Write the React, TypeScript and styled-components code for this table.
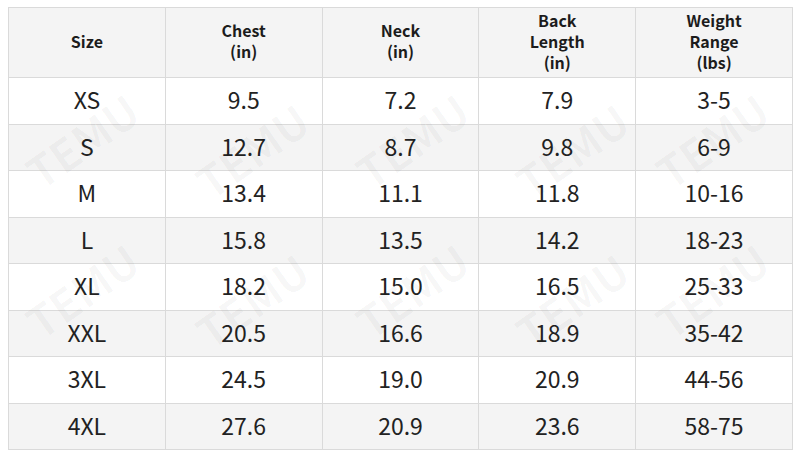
import React from "react";
import styled, { createGlobalStyle } from "styled-components";

const rows = [
  ["XS", "9.5", "7.2", "7.9", "3-5"],
  ["S", "12.7", "8.7", "9.8", "6-9"],
  ["M", "13.4", "11.1", "11.8", "10-16"],
  ["L", "15.8", "13.5", "14.2", "18-23"],
  ["XL", "18.2", "15.0", "16.5", "25-33"],
  ["XXL", "20.5", "16.6", "18.9", "35-42"],
  ["3XL", "24.5", "19.0", "20.9", "44-56"],
  ["4XL", "27.6", "20.9", "23.6", "58-75"],
];

const heads = [["Size"], ["Chest", "(in)"], ["Neck", "(in)"], ["Back", "Length", "(in)"], ["Weight", "Range", "(lbs)"]];

// faint watermark spots, kept inside the table
const marks = [
  [10, 110], [180, 120], [340, 110], [500, 120], [640, 110],
  [10, 260], [180, 270], [340, 260], [500, 270], [640, 260],
];

const App = () => {
  return (
    <Page>
      <GlobalStyle />
      <Table>
        <Row $shade $head>
          {heads.map((h, i) => (
            <Head key={i}>
              {h.map((l) => (
                <Line key={l}>{l}</Line>
              ))}
            </Head>
          ))}
        </Row>
        {rows.map((r, i) => (
          <Row key={r[0]} $shade={i % 2 === 1}>
            {r.map((c, j) => (
              <Cell key={j}>{c}</Cell>
            ))}
          </Row>
        ))}
        {marks.map(([x, y], i) => (
          <Mark key={i} style={{ left: x, top: y }}>
            TEMU
          </Mark>
        ))}
      </Table>
    </Page>
  );
};

export default App;

const GlobalStyle = createGlobalStyle`
  body {
    margin: 0;
    background: #ffffff;
    font-family: "Noto Sans CJK SC", "Noto Sans", sans-serif;
  }
`;

const Page = styled.div`
  width: 800px;
  height: 457px;
  padding: 7px 8px 0 8px;
  box-sizing: border-box;
  background: #ffffff;
`;

const Table = styled.div`
  position: relative;
  overflow: hidden;
  width: 784px;
  display: flex;
  flex-direction: column;
  border-top: 1px solid #dadada;
  border-left: 1px solid #dadada;
`;

const Row = styled.div<{ $shade?: boolean; $head?: boolean }>`
  display: grid;
  grid-template-columns: repeat(5, 1fr);
  background: ${(p) => (p.$shade ? "#f4f4f4" : "#ffffff")};
  height: ${(p) => (p.$head ? "70px" : "46.5px")};
`;

const Head = styled.div`
  display: flex;
  flex-direction: column;
  align-items: center;
  justify-content: center;
  padding-bottom: 3px;
  border-right: 1px solid #dadada;
  border-bottom: 1px solid #dadada;
  font-size: 16px;
  font-weight: 700;
  color: #1c1c1c;
`;

const Line = styled.div`
  line-height: 21.5px;
  height: 21px;
`;

const Cell = styled.div`
  display: flex;
  align-items: center;
  justify-content: center;
  padding-bottom: 3px;
  border-right: 1px solid #dadada;
  border-bottom: 1px solid #dadada;
  font-size: 23px;
  color: #222222;
`;

const Mark = styled.div`
  position: absolute;
  font-size: 44px;
  font-weight: 700;
  line-height: 1;
  color: rgba(0, 0, 0, 0.03);
  transform: rotate(-35deg);
  pointer-events: none;
`;
